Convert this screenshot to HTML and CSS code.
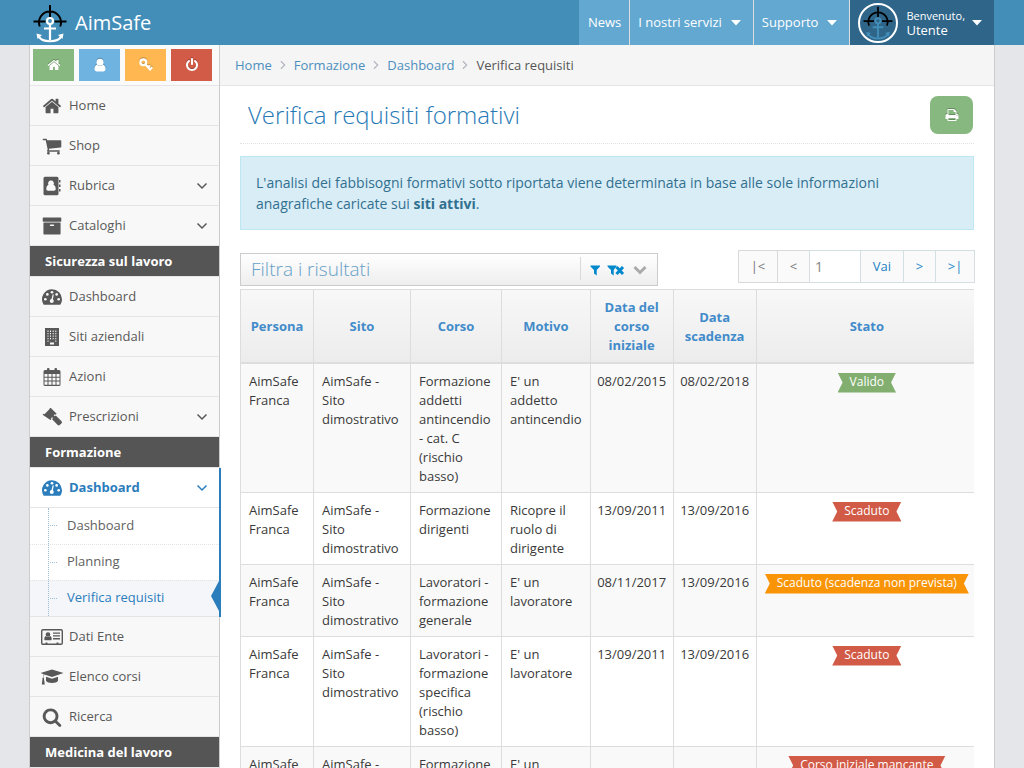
FILE: index.html
```html
<!DOCTYPE html>
<html lang="it">
<head>
<meta charset="utf-8">
<meta name="viewport" content="width=device-width, initial-scale=1">
<title>AimSafe - Verifica requisiti formativi</title>
<link rel="stylesheet" href="styles.css">
</head>
<body>
<svg class="sprite" aria-hidden="true">
  <symbol id="i-home" viewBox="0 0 1792 1792"><path d="M1472 992v480q0 26-19 45t-45 19h-384v-384h-256v384h-384q-26 0-45-19t-19-45v-480q0-1 .5-3t.5-3l575-474 575 474q1 2 1 6zm223-69l-62 74q-8 9-21 11h-3q-13 0-21-7l-692-577-692 577q-12 8-24 7-13-2-21-11l-62-74q-8-10-7-23.5t11-21.5l719-599q32-26 76-26t76 26l244 204v-195q0-14 9-23t23-9h192q14 0 23 9t9 23v408l219 182q10 8 11 21.5t-7 23.5z"/></symbol>
  <symbol id="i-search" viewBox="0 0 1792 1792"><path d="M1216 832q0-185-131.5-316.5t-316.5-131.5-316.5 131.5-131.5 316.5 131.5 316.5 316.5 131.5 316.5-131.5 131.5-316.5zm512 832q0 52-38 90t-90 38q-54 0-90-38l-343-342q-179 124-399 124-143 0-273.5-55.5t-225-150-150-225-55.5-273.5 55.5-273.5 150-225 225-150 273.5-55.5 273.5 55.5 225 150 150 225 55.5 273.5q0 220-124 399l343 343q37 37 37 90z"/></symbol>
  <symbol id="i-filter" viewBox="0 0 11 14"><path d="M.5 2.500h9.500v1L6.700 7v5.500L4 10.500V7L.5 3.500z"/></symbol>
  <symbol id="i-power" viewBox="0 0 1792 1792"><path d="M1664 896q0 156-61 298t-164 245-245 164-298 61-298-61-245-164-164-245-61-298q0-182 80.5-343t226.5-270q43-32 95.5-25t83.5 50q32 42 24.500 94.500t-49.500 84.500q-98 74-151.500 181t-53.500 228q0 104 40.500 198.500t109.500 163.500 163.500 109.500 198.500 40.500 198.500-40.500 163.500-109.500 109.500-163.500 40.500-198.500q0-121-53.500-228t-151.500-181q-42-32-49.500-84.500t24.500-94.500q31-43 84-50t95 25q146 109 226.500 270t80.500 343zm-640-768v640q0 52-38 90t-90 38-90-38-38-90v-640q0-52 38-90t90-38 90 38 38 90z"/></symbol>
  <symbol id="i-print" viewBox="0 0 1792 1792"><path d="M448 1536h896v-256h-896v256zm0-640h896v-384h-160q-40 0-68-28t-28-68v-160h-640v640zm1152 64q0-26-19-45t-45-19-45 19-19 45 19 45 45 19 45-19 19-45zm128 0v416q0 13-9.500 22.500t-22.500 9.500h-224v160q0 40-28 68t-68 28h-960q-40 0-68-28t-28-68v-160h-224q-13 0-22.500-9.500t-9.500-22.500v-416q0-79 56.500-135.500t135.500-56.500h64v-544q0-40 28-68t68-28h672q40 0 88 20t76 48l152 152q28 28 48 76t20 88v256h64q79 0 135.500 56.500t56.500 135.500z"/></symbol>
  <symbol id="i-cart" viewBox="0 0 1792 1792"><path d="M704 1536q0 52-38 90t-90 38-90-38-38-90 38-90 90-38 90 38 38 90zm896 0q0 52-38 90t-90 38-90-38-38-90 38-90 90-38 90 38 38 90zm128-1088v512q0 24-16.500 42.500t-40.500 21.500l-1044 122q13 60 13 70 0 16-24 64h920q26 0 45 19t19 45-19 45-45 19h-1024q-26 0-45-19t-19-45q0-11 8-31.500t16-36 21.500-40 15.500-29.500l-177-823h-204q-26 0-45-19t-19-45 19-45 45-19h256q16 0 28.500 6.500t19.500 15.500 13 24.500 8 26 5.500 29.500 4.500 26h1201q26 0 45 19t19 45z"/></symbol>
  <symbol id="i-archive" viewBox="0 0 1792 1792"><path d="M1088 832q0-26-19-45t-45-19h-256q-26 0-45 19t-19 45 19 45 45 19h256q26 0 45-19t19-45zm576-192v960q0 26-19 45t-45 19h-1408q-26 0-45-19t-19-45v-960q0-26 19-45t45-19h1408q26 0 45 19t19 45zm64-448v256q0 26-19 45t-45 19h-1536q-26 0-45-19t-19-45v-256q0-26 19-45t45-19h1536q26 0 45 19t19 45z"/></symbol>
  <symbol id="i-angle" viewBox="0 0 12 12"><path d="M1.500 3.500 6 8l4.500-4.500" fill="none" stroke="currentColor" stroke-width="1.500"/></symbol>
  <symbol id="i-chevron" viewBox="0 0 14 14"><path d="M1.500 4 7 9.500 12.500 4" fill="none" stroke="currentColor" stroke-width="3"/></symbol>
  <symbol id="i-caret" viewBox="0 0 10 6"><path d="M0 0h10L5 5.500z"/></symbol>
  <symbol id="i-user" viewBox="0 0 14 14"><circle cx="7" cy="4.200" r="3.500"/><path d="M4 6.500C2.300 7 1.500 9 1.500 11c0 1.500 1 2.500 2.300 2.500h6.400c1.300 0 2.300-1 2.300-2.500 0-2-.8-4-2.500-4.500-1.500 2-4.500 2-6 0z"/></symbol>
  <symbol id="i-key" viewBox="0 0 14 14"><g fill="none" stroke="currentColor"><circle cx="4.300" cy="4.300" r="2.900" stroke-width="2.200"/><path d="m6.300 6.300 5.500 5.900" stroke-width="2.200"/><path d="m9 9.300 1.900-1.900M11 11.400l2.300-2.300" stroke-width="2"/></g></symbol>
  <symbol id="i-book" viewBox="0 0 18 20"><path fill-rule="evenodd" d="M2 .8h12a1.500 1.500 0 0 1 1.500 1.500v15.400a1.500 1.500 0 0 1-1.500 1.500H2a1.500 1.500 0 0 1-1.500-1.500V2.300A1.500 1.500 0 0 1 2 .8zm6 3.700a2.800 2.800 0 0 0-2.500 4.300C4 9.500 3.300 11 3.300 13c0 1 .7 1.700 1.700 1.700h6c1 0 1.700-.7 1.700-1.700 0-2-.7-3.500-2.200-4.200A2.800 2.800 0 0 0 8 4.500zM16 4h1.500v2.500H16zM16 8.500h1.500V11H16zM16 13h1.500v2.500H16z"/></symbol>
  <symbol id="i-gauge" viewBox="0 0 18 18"><path fill-rule="evenodd" d="M9 2a9 9 0 0 1 9 9c0 1.800-.5 3.400-1.400 4.700-.2.200-.4.300-.6.300H2c-.3 0-.5-.1-.6-.3A9 9 0 0 1 9 2z"/><g class="cutout"><circle cx="3" cy="11" r="1.200"/><circle cx="4.800" cy="6.700" r="1.200"/><circle cx="9" cy="4.700" r="1.200"/><circle cx="13.200" cy="6.700" r="1.200"/><circle cx="15" cy="11" r="1.200"/><circle cx="8.800" cy="12.500" r="1.800"/><path d="m8.300 12 1.300-5.500 1 .3-1 5.500z"/></g></symbol>
  <symbol id="i-building" viewBox="0 0 16 20"><path d="M1 1h14v18H1z"/><g class="cutout"><path d="M3.500 3.500h1V5h-1zM6 3.500h1V5H6zM8.700 3.500h1V5h-1zM11.300 3.500h1V5h-1zM3.500 6h1v1.300h-1zM6 6h1v1.300H6zM8.700 6h1v1.300h-1zM11.300 6h1v1.300h-1zM3.500 8.500h1v1.300h-1zM6 8.500h1v1.300H6zM8.700 8.500h1v1.300h-1zM11.300 8.500h1v1.300h-1zM3.500 11h1v1.300h-1zM6 11h1v1.300H6zM8.700 11h1v1.300h-1zM11.300 11h1v1.300h-1zM3.500 13.500h1v1.300h-1zM11.300 13.500h1v1.300h-1zM6 15.500h4v2H6z"/></g></symbol>
  <symbol id="i-calendar" viewBox="0 0 18 20"><path fill-rule="evenodd" d="M2 3h2V2a1 1 0 0 1 1-1h.500a1 1 0 0 1 1 1v1h5V2a1 1 0 0 1 1-1h.500a1 1 0 0 1 1 1v1h2a1.500 1.500 0 0 1 1.500 1.500V17.500a1.500 1.500 0 0 1-1.500 1.500H2A1.500 1.500 0 0 1 .5 17.500V4.500A1.500 1.500 0 0 1 2 3zm-.5 4v2.800h3V7zm4 0v2.800h3V7zm4 0v2.800h3V7zm4 0v2.800h3V7zm-12 3.800v2.800h3v-2.800zm4 0v2.800h3v-2.800zm4 0v2.800h3v-2.800zm4 0v2.800h3v-2.800zm-12 3.800v3.200h3v-3.200zm4 0v3.200h3v-3.200zm4 0v3.200h3v-3.200zm4 0v3.200h3v-3.200z"/></symbol>
  <symbol id="i-gavel" viewBox="0 0 18 18"><path d="M8 .8 13.200 6l-1 1-.6-.5-1 1 .8.900 1-.8 5 4.900c.8.800.8 1.500 0 2.300l-1.200 1.200c-.8.800-1.500.8-2.300 0l-4.800-5 .8-1-.9-.8-1 1 .6.500-1 1L.5 7l1-1 .7.500 4.900-4.900L6.800 1z"/></symbol>
  <symbol id="i-card" viewBox="0 0 22 18"><path d="M2 1.700h18c.8 0 1.300.5 1.300 1.300v12c0 .8-.5 1.300-1.300 1.300H2C1.200 16.300.7 15.800.7 15V3c0-.8.5-1.300 1.300-1.300z" fill="none" stroke="currentColor" stroke-width="1.400"/><circle cx="7" cy="6.500" r="2.300"/><path d="M4.800 8c-1 .5-1.500 1.500-1.500 3 0 .8.400 1.300 1 1.300h5.400c.6 0 1-.5 1-1.300 0-1.500-.5-2.500-1.500-3-1 1.200-3.400 1.200-4.400 0zM12 4.500h7v1.300h-7zM12 7.300h7v1.300h-7zM12 10.100h7v1.300h-7zM4.500 14.500h2V17h-2zM15.500 14.500h2V17h-2z"/></symbol>
  <symbol id="i-cap" viewBox="0 0 24 18"><path d="M12 1.500 23.500 5 12 9 4.500 6.500C3.800 7 3.500 8 3.400 9.500c.5.300.8.700.6 1.500l.8 5.500H1.800L2.500 11c-.2-.8.100-1.200.6-1.500 0-1.500.2-2.600.7-3.300L.5 5z"/><path d="m6 8.700 6 2 6-2v4c-1.500 3-10.500 3-12 0z"/></symbol>
  <symbol id="i-anchor" viewBox="0 0 34 40"><path class="target" d="M6.800 23.500a11 11 0 1 1 20.400 0M17 2v12M.5 18.500h12M21.500 18.500h12" fill="none" stroke-width="2"/><g class="hook" fill="none" stroke-width="2.200"><circle cx="17" cy="18" r="3"/><path d="M17 21v16M11 25.500h12"/><path d="M5.500 33C9 40 25 40 28.500 33"/></g><path class="fluke" d="m3.500 30.500 5.500 1.500-4.500 4zM30.500 30.500 25 32l4.500 4z"/></symbol>
</svg>

<header class="navbar">
  <div class="navbar-inner">
    <a class="brand" href="#"><svg class="brand-logo" aria-hidden="true"><use href="#i-anchor"/></svg>AimSafe</a>
    <nav class="top-nav" aria-label="Principale">
      <a class="top-link" href="#">News</a>
      <a class="top-link" href="#">I nostri servizi<svg class="caret" aria-hidden="true"><use href="#i-caret"/></svg></a>
      <a class="top-link" href="#">Supporto<svg class="caret" aria-hidden="true"><use href="#i-caret"/></svg></a>
      <a class="top-link user-link" href="#">
        <span class="avatar"><svg aria-hidden="true"><use href="#i-anchor"/></svg></span>
        <span class="user-info"><small>Benvenuto,</small>Utente</span>
        <svg class="caret" aria-hidden="true"><use href="#i-caret"/></svg>
      </a>
    </nav>
  </div>
</header>

<div class="page">
  <aside class="sidebar">
    <div class="shortcuts">
      <button class="shortcut green" aria-label="Home"><svg aria-hidden="true"><use href="#i-home"/></svg></button>
      <button class="shortcut blue" aria-label="Profilo"><svg aria-hidden="true"><use href="#i-user"/></svg></button>
      <button class="shortcut orange" aria-label="Password"><svg aria-hidden="true"><use href="#i-key"/></svg></button>
      <button class="shortcut red" aria-label="Esci"><svg aria-hidden="true"><use href="#i-power"/></svg></button>
    </div>
    <ul class="menu">
      <li><a class="menu-link" href="#"><svg class="menu-icon" aria-hidden="true"><use href="#i-home"/></svg>Home</a></li>
      <li><a class="menu-link" href="#"><svg class="menu-icon" aria-hidden="true"><use href="#i-cart"/></svg>Shop</a></li>
      <li><a class="menu-link" href="#"><svg class="menu-icon" aria-hidden="true"><use href="#i-book"/></svg>Rubrica<svg class="arrow" aria-hidden="true"><use href="#i-angle"/></svg></a></li>
      <li><a class="menu-link" href="#"><svg class="menu-icon" aria-hidden="true"><use href="#i-archive"/></svg>Cataloghi<svg class="arrow" aria-hidden="true"><use href="#i-angle"/></svg></a></li>
      <li class="menu-heading">Sicurezza sul lavoro</li>
      <li><a class="menu-link" href="#"><svg class="menu-icon" aria-hidden="true"><use href="#i-gauge"/></svg>Dashboard</a></li>
      <li><a class="menu-link" href="#"><svg class="menu-icon" aria-hidden="true"><use href="#i-building"/></svg>Siti aziendali</a></li>
      <li><a class="menu-link" href="#"><svg class="menu-icon" aria-hidden="true"><use href="#i-calendar"/></svg>Azioni</a></li>
      <li><a class="menu-link" href="#"><svg class="menu-icon" aria-hidden="true"><use href="#i-gavel"/></svg>Prescrizioni<svg class="arrow" aria-hidden="true"><use href="#i-angle"/></svg></a></li>
      <li class="menu-heading">Formazione</li>
      <li class="open">
        <a class="menu-link" href="#"><svg class="menu-icon" aria-hidden="true"><use href="#i-gauge"/></svg>Dashboard<svg class="arrow" aria-hidden="true"><use href="#i-angle"/></svg></a>
        <ul class="submenu">
          <li><a class="submenu-link" href="#">Dashboard</a></li>
          <li><a class="submenu-link" href="#">Planning</a></li>
          <li><a class="submenu-link current" href="#" aria-current="page">Verifica requisiti</a></li>
        </ul>
      </li>
      <li><a class="menu-link" href="#"><svg class="menu-icon" aria-hidden="true"><use href="#i-card"/></svg>Dati Ente</a></li>
      <li><a class="menu-link" href="#"><svg class="menu-icon wide" aria-hidden="true"><use href="#i-cap"/></svg>Elenco corsi</a></li>
      <li><a class="menu-link" href="#"><svg class="menu-icon" aria-hidden="true"><use href="#i-search"/></svg>Ricerca</a></li>
      <li class="menu-heading">Medicina del lavoro</li>
    </ul>
  </aside>

  <main class="main">
    <nav class="breadcrumb" aria-label="Percorso">
      <a href="#">Home</a><svg aria-hidden="true"><use href="#i-angle"/></svg>
      <a href="#">Formazione</a><svg aria-hidden="true"><use href="#i-angle"/></svg>
      <a href="#">Dashboard</a><svg aria-hidden="true"><use href="#i-angle"/></svg>
      <span>Verifica requisiti</span>
    </nav>
    <div class="content">
      <div class="page-header">
        <h1>Verifica requisiti formativi</h1>
        <button class="print" aria-label="Stampa"><svg aria-hidden="true"><use href="#i-print"/></svg></button>
      </div>
      <p class="alert">L'analisi dei fabbisogni formativi sotto riportata viene determinata in base alle sole informazioni anagrafiche caricate sui <strong>siti attivi</strong>.</p>
      <div class="toolbar">
        <section class="filter">
          <h2>Filtra i risultati</h2>
          <div class="filter-tools">
            <button aria-label="Filtra"><svg aria-hidden="true"><use href="#i-filter"/></svg></button>
            <button aria-label="Rimuovi filtro"><svg class="clear" viewBox="0 0 18 14" aria-hidden="true"><path d="M.5 2.500h9v1L6.700 7v5.500L4 10.500V7L.5 3.500z"/><path d="m9.500 4 6.500 7M16 4l-6.500 7" fill="none" stroke="currentColor" stroke-width="3"/></svg></button>
            <button class="toggle" aria-label="Espandi"><svg aria-hidden="true"><use href="#i-chevron"/></svg></button>
          </div>
        </section>
        <form class="pager" aria-label="Paginazione">
          <button type="button" class="wide" disabled>|&lt;</button>
          <button type="button" disabled>&lt;</button>
          <input type="text" value="1" aria-label="Pagina">
          <button type="button" class="go">Vai</button>
          <button type="button">&gt;</button>
          <button type="button" class="wide">&gt;|</button>
        </form>
      </div>
      <div class="table-wrap">
        <table>
          <thead>
            <tr><th class="c-person">Persona</th><th class="c-site">Sito</th><th class="c-course">Corso</th><th class="c-reason">Motivo</th><th class="c-date">Data del corso iniziale</th><th class="c-date">Data scadenza</th><th class="c-state">Stato</th></tr>
          </thead>
          <tbody>
            <tr><td>AimSafe Franca</td><td>AimSafe - Sito dimostrativo</td><td>Formazione addetti antincendio - cat. C (rischio basso)</td><td>E' un addetto antincendio</td><td class="date">08/02/2015</td><td class="date">08/02/2018</td><td class="state"><span class="ribbon ok">Valido</span></td></tr>
            <tr><td>AimSafe Franca</td><td>AimSafe - Sito dimostrativo</td><td>Formazione dirigenti</td><td>Ricopre il ruolo di dirigente</td><td class="date">13/09/2011</td><td class="date">13/09/2016</td><td class="state"><span class="ribbon expired">Scaduto</span></td></tr>
            <tr><td>AimSafe Franca</td><td>AimSafe - Sito dimostrativo</td><td>Lavoratori - formazione generale</td><td>E' un lavoratore</td><td class="date">08/11/2017</td><td class="date">13/09/2016</td><td class="state"><span class="ribbon warning">Scaduto (scadenza non prevista)</span></td></tr>
            <tr><td>AimSafe Franca</td><td>AimSafe - Sito dimostrativo</td><td>Lavoratori - formazione specifica (rischio basso)</td><td>E' un lavoratore</td><td class="date">13/09/2011</td><td class="date">13/09/2016</td><td class="state"><span class="ribbon expired">Scaduto</span></td></tr>
            <tr><td>AimSafe Franca</td><td>AimSafe - Sito dimostrativo</td><td>Formazione</td><td>E' un</td><td></td><td></td><td class="state"><span class="ribbon expired">Corso iniziale mancante</span></td></tr>
          </tbody>
        </table>
      </div>
    </div>
  </main>
</div>
</body>
</html>
```

FILE: styles.css
```css
* { box-sizing: border-box; }

body {
  margin: 0;
  min-height: 100vh;
  display: flex;
  flex-direction: column;
  background: #e4e6e9;
  color: #393939;
  font: 13px/19px "Open Sans", sans-serif;
}

a { text-decoration: none; color: inherit; }
ul { list-style: none; margin: 0; padding: 0; }
button, input { font: inherit; margin: 0; border: 0; padding: 0; border-radius: 0; }
svg { display: block; fill: currentColor; flex: none; }
.sprite { position: absolute; width: 0; height: 0; }

/* Top bar */
.navbar { position: relative; z-index: 1; background: #438eb9; padding: 0 30px; color: #fff; }
.navbar-inner { display: flex; justify-content: space-between; height: 45px; }
.brand { display: flex; align-items: center; gap: 8px; padding-left: 3px; font-size: 20px; }
.brand-logo { width: 34px; height: 42px; }
.target { stroke: #000; }
.hook { stroke: var(--hook, #fff); }
.fluke { fill: var(--hook, #fff); }
.top-nav { display: flex; }
.top-link { display: flex; align-items: center; padding: 0 8px; background: #62a8d1; border-left: 1px solid #ddd; white-space: nowrap; }
.top-link:first-child { border-left: 0; padding-left: 9px; }
.caret { width: 10px; height: 6px; margin: 0 4px 0 9px; }
.user-link { background: #2e6589; }
.avatar { --hook: #438eb9; display: grid; place-items: center; width: 40px; height: 40px; border: 2px solid #fff; border-radius: 50%; margin-right: 8px; }
.avatar svg { width: 30px; height: 35px; }
.user-info { display: flex; flex-direction: column; line-height: 15px; }
.user-info small { font-size: 11px; }
.user-link .caret { margin-left: 7px; }

/* Page frame */
.page { flex: 1; display: flex; margin: 0 30px; background: #fff; box-shadow: 0 0 0 1px #ccc; }

/* Sidebar */
.sidebar { flex: 0 0 190px; background: #f2f2f2; border-right: 1px solid #ccc; color: #585858; }
.shortcuts { display: flex; gap: 5px; padding: 4px 3px; height: 41px; background: #fafafa; border-bottom: 1px solid #e5e5e5; }
.shortcut { display: grid; place-items: center; width: 41px; height: 32px; color: #fff; }
.shortcut svg { width: 14px; height: 14px; filter: drop-shadow(0 -1px 0 rgba(0, 0, 0, .25)); }
.green { background: #87b87f; }
.blue { background: #6fb3e0; }
.orange { background: #ffb752; }
.red { background: #d15b47; }

.menu-link { --cut: #f8f8f8; display: flex; align-items: center; height: 40px; padding: 0 11px; background: #f8f8f8; border-bottom: 1px solid #e5e5e5; }
.menu-icon { width: 22px; height: 20px; margin-right: 6px; }
.menu-icon.wide { width: 24px; margin: 0 5px 0 -1px; }
.cutout { fill: var(--cut); }
.arrow { width: 12px; height: 12px; margin-left: auto; }
.menu-heading { height: 31px; padding: 0 15px; background: #555; border-bottom: 1px solid #e5e5e5; color: #fff; font-weight: 700; line-height: 30px; }
.open { position: relative; background: #fff; }
.open::after { content: ""; position: absolute; top: 0; bottom: 0; right: -2px; width: 2px; background: #2b7dbc; }
.open > .menu-link { --cut: #fff; background: #fff; color: #2b7dbc; font-weight: 700; }
.submenu { position: relative; border-bottom: 1px solid #e5e5e5; }
.submenu::before { content: ""; position: absolute; z-index: 1; top: 0; bottom: 0; left: 18px; border-left: 1px dotted #9dbdd6; }
.submenu-link { position: relative; display: flex; align-items: center; height: 36px; padding: 0 0 2px 37px; color: #616161; border-top: 1px dotted #e4e4e4; }
.submenu li:first-child .submenu-link { border-top: 0; }
.submenu-link::before { content: ""; position: absolute; left: 20px; top: 17px; width: 7px; border-top: 1px dotted #9dbdd6; }
.submenu-link.current { background: #f4f6fa; color: #2b7dbc; }
.submenu-link.current::after { content: ""; position: absolute; right: 0; top: 0; border: solid transparent; border-width: 15px 8px 15px 0; border-right-color: #2b7dbc; }

/* Main column */
.main { flex: 1; min-width: 0; }
.breadcrumb { display: flex; align-items: center; height: 41px; padding: 0 15px; background: #f5f5f5; border-bottom: 1px solid #e5e5e5; color: #555; }
.breadcrumb a { color: #4c8fbd; }
.breadcrumb svg { width: 10px; height: 10px; margin: 0 6px; color: #b2b6bf; transform: rotate(-90deg); }
.content { padding: 10px 20px 24px; }
.page-header { display: flex; justify-content: space-between; align-items: flex-start; padding: 0 1px 9px 8px; border-bottom: 1px dotted #e2e2e2; margin-bottom: 12px; }
h1 { margin: 0; font-size: 24px; line-height: 38px; font-weight: 300; color: #2679b5; }
.print { display: grid; place-items: center; width: 43px; height: 38px; border-radius: 8px; background: #87b87f; color: #fff; }
.print svg { width: 14px; height: 14px; filter: drop-shadow(0 -1px 0 rgba(0, 0, 0, .25)); }
.alert { margin: 0 0 20px; padding: 15px; background: #d9edf7; border: 1px solid #bce8f1; color: #31708f; font-size: 14px; line-height: 21px; }

.toolbar { display: flex; justify-content: space-between; align-items: flex-start; margin-bottom: 3px; }
.filter { display: flex; flex: 0 0 57%; height: 33px; margin-top: 3px; padding-left: 10px; border: 1px solid #ccc; background: linear-gradient(#fff, #eee); color: #669fc7; }
h2 { flex: 1; margin: 0; font-size: 19px; line-height: 31px; font-weight: 300; }
.filter-tools { display: flex; align-items: center; gap: 6px; height: 23px; margin-top: 3px; padding: 3px 10px 0 9px; border-left: 1px solid #d9d9d9; }
.filter-tools button { background: none; color: #0088cc; }
.filter-tools svg { width: 11px; height: 14px; }
.filter-tools .clear { width: 18px; }
.filter-tools .toggle { color: #aaa; margin-left: 2px; }
.filter-tools .toggle svg { width: 14px; }

.pager { display: flex; margin-right: -1px; }
.pager button, .pager input { width: 33px; height: 33px; margin-left: -1px; border: 1px solid #d4dfe3; background: #fafafa; color: #2283c5; }
.pager button:disabled { color: #777; border-color: #d9d9d9; }
.pager .wide { width: 40px; }
.pager .go { width: 44px; }
.pager input { width: 52px; padding: 0 5px; background: #fff; color: #858585; font-size: 14px; }

/* Results */
.table-wrap { overflow: hidden; }
table { width: 738px; min-width: 100%; border-collapse: collapse; }
th, td { padding: 8px 8px 6px; border: 1px solid #ddd; vertical-align: top; text-align: left; }
th { height: 73px; vertical-align: middle; text-align: center; color: #428bca; border-bottom-width: 2px; }
thead tr { background: linear-gradient(#f8f8f8, #ececec); }
tbody tr:nth-child(odd) { background: #f9f9f9; }
.c-person { width: 73px; }
.c-site { width: 97px; }
.c-course { width: 91px; }
.c-reason { width: 88px; }
.c-date { width: 83px; }
.date { padding-left: 6px; padding-right: 6px; text-align: center; }
.state { text-align: center; }
.ribbon { display: inline-block; height: 20px; margin-top: 1px; padding: 0 12px; color: #fff; font-size: 12px; line-height: 18px; white-space: nowrap; vertical-align: top; clip-path: polygon(0 0, 100% 0, calc(100% - 5px) 50%, 100% 100%, 0 100%, 5px 50%); }
.ok { background: #82af6f; }
.expired { background: #d15b47; }
.warning { background: #f89406; }
```
